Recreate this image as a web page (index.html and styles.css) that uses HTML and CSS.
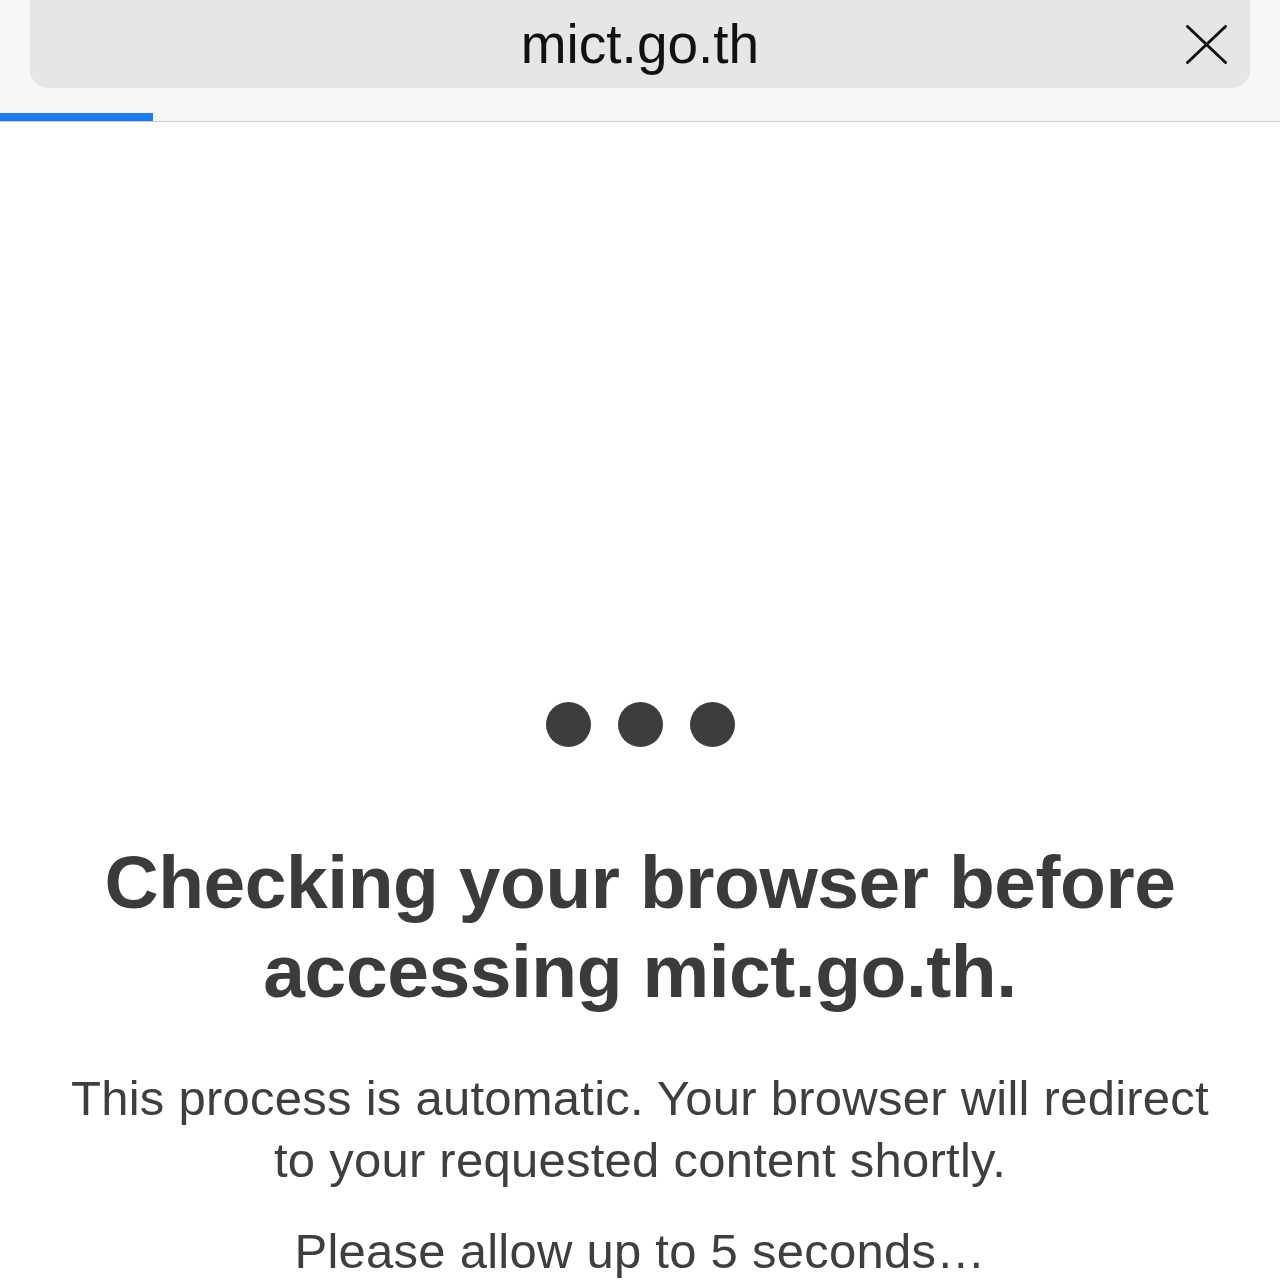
FILE: index.html
```html
<!DOCTYPE html>
<html lang="en">
<head>
<meta charset="utf-8">
<title>mict.go.th</title>
<link rel="stylesheet" href="styles.css">
</head>
<body>
<header class="topbar">
  <div class="address">
    <span class="spacer"></span>
    <span class="domain">mict.go.th</span>
    <span class="close">
      <svg width="41" height="39" viewBox="0 0 41 39" aria-hidden="true">
        <path d="M1.5 1.5 L39.5 37.5 M39.5 1.5 L1.5 37.5" stroke="#111" stroke-width="3" stroke-linecap="round" fill="none"/>
      </svg>
    </span>
  </div>
  <div class="progress"><div class="progress-fill" style="width:153px"></div></div>
</header>
<main class="content">
  <div class="dots">
    <span class="dot"></span><span class="dot"></span><span class="dot"></span>
  </div>
  <h1 class="title">Checking your browser before<br>accessing mict.go.th.</h1>
  <p class="lead">This process is automatic. Your browser will redirect<br>to your requested content shortly.</p>
  <p class="note">Please allow up to 5 seconds…</p>
</main>
</body>
</html>
```
FILE: styles.css
```css
html, body {
  margin: 0;
  padding: 0;
  background: #ffffff;
}
body {
  font-family: "Liberation Sans", Arial, sans-serif;
  color: #3e3c3f;
  overflow: hidden;
  height: 1281px;
}
.topbar {
  background: #f7f7f7;
  border-bottom: 1px solid #cbcbcb;
}
.address {
  margin: 0 30px;
  height: 88px;
  background: #e6e6e6;
  border-radius: 0 0 18px 18px;
  display: grid;
  grid-template-columns: 1fr auto 1fr;
  align-items: center;
}
.domain {
  font-size: 55px;
  line-height: 86px;
  color: #111111;
  letter-spacing: 0;
}
.close {
  justify-self: end;
  padding-right: 23px;
  display: flex;
  align-items: center;
  height: 39px;
  margin-top: 1px;
}
.progress {
  margin-top: 25px;
  height: 8px;
}
.progress-fill {
  height: 8px;
  background: #1a7cf2;
}
.content {
  display: flex;
  flex-direction: column;
  align-items: center;
  text-align: center;
  padding-top: 580px;
}
.dots {
  display: flex;
  gap: 27px;
  height: 45px;
}
.dot {
  width: 45px;
  height: 45px;
  border-radius: 50%;
  background: #3e3c3f;
}
.title {
  margin: 91px 0 0;
  font-size: 75px;
  line-height: 89px;
  font-weight: 700;
  letter-spacing: -0.45px;
  color: #3c3a3d;
}
.lead {
  margin: 51px 0 0;
  font-size: 49px;
  line-height: 62px;
  letter-spacing: 0.25px;
  color: #403e41;
}
.note {
  margin: 29px 0 0;
  font-size: 49px;
  line-height: 62px;
  letter-spacing: 0.25px;
  color: #403e41;
}
```
